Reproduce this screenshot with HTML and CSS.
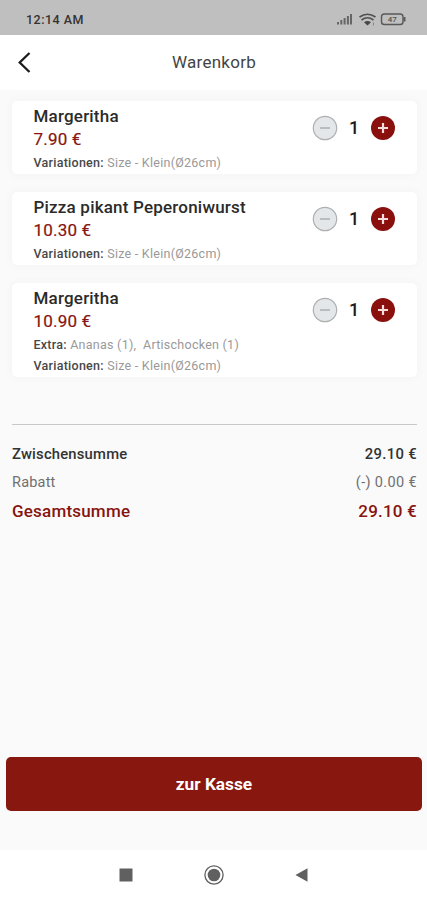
FILE: index.html
```html
<!DOCTYPE html>
<html lang="de">
<head>
<meta charset="utf-8">
<title>Warenkorb</title>
<link rel="stylesheet" href="styles.css">
</head>
<body>
<div class="status">
  <span class="time">12:14 AM</span>
  <svg class="status-icons" width="74" height="18" viewBox="0 0 74 18">
    <g fill="#666"><rect x="1" y="11" width="2" height="2.500"/><rect x="4.300" y="9" width="2" height="4.500"/><rect x="7.600" y="7" width="2" height="6.500"/><rect x="10.900" y="5" width="2" height="8.500"/><rect x="14" y="3" width="2" height="10.500"/></g>
    <g fill="none" stroke="#505050" stroke-width="1.700"><path d="M23.500 6q8-5.500 16 0"/><path d="M25.500 9q6-4.500 12 0"/></g>
    <path d="M28 11.200q3.500-2.500 7 0l-3.500 3.300z" fill="#484848"/>
    <path d="M37.500 11.500v3" stroke="#888"/>
    <rect x="45.500" y="3" width="21.500" height="10.500" rx="2.800" fill="none" stroke="#585858" stroke-width="1.400"/>
    <path d="M68.500 6v4.500" stroke="#585858" stroke-width="2"/>
    <text class="battery" x="56.300" y="11.200" text-anchor="middle">47</text>
  </svg>
</div>
<header class="header">
  <svg class="back" width="16" height="24" viewBox="0 0 16 24"><path d="M13.500 2L3.700 11.500L13.500 21" fill="none" stroke="#1c1c1c" stroke-width="2.300"/></svg>
  <h1 class="title">Warenkorb</h1>
</header>
<main class="main">
  <section class="cards">
    <article class="card">
      <div class="info">
        <div class="name">Margeritha</div>
        <div class="price">7.90 €</div>
        <div class="detail"><b>Variationen:</b> Size - Klein(Ø26cm)</div>
      </div>
      <div class="stepper">
        <svg width="26" height="26" viewBox="0 0 26 26"><circle cx="13" cy="13" r="11.700" fill="#e4e7e9" stroke="#adafb0" stroke-width="1.200"/><path d="M8 13h10" stroke="#b5b8ba" stroke-width="1.800"/></svg>
        <span class="qty">1</span>
        <svg width="26" height="26" viewBox="0 0 26 26"><circle cx="13" cy="13" r="12" fill="#8a100e"/><path d="M8 13h10M13 8v10" stroke="#f3dddd" stroke-width="2.200"/></svg>
      </div>
    </article>
    <article class="card">
      <div class="info">
        <div class="name">Pizza pikant Peperoniwurst</div>
        <div class="price">10.30 €</div>
        <div class="detail"><b>Variationen:</b> Size - Klein(Ø26cm)</div>
      </div>
      <div class="stepper">
        <svg width="26" height="26" viewBox="0 0 26 26"><circle cx="13" cy="13" r="11.700" fill="#e4e7e9" stroke="#adafb0" stroke-width="1.200"/><path d="M8 13h10" stroke="#b5b8ba" stroke-width="1.800"/></svg>
        <span class="qty">1</span>
        <svg width="26" height="26" viewBox="0 0 26 26"><circle cx="13" cy="13" r="12" fill="#8a100e"/><path d="M8 13h10M13 8v10" stroke="#f3dddd" stroke-width="2.200"/></svg>
      </div>
    </article>
    <article class="card">
      <div class="info">
        <div class="name">Margeritha</div>
        <div class="price">10.90 €</div>
        <div class="detail"><b>Extra:</b> Ananas (1),&nbsp; Artischocken (1)</div>
        <div class="detail"><b>Variationen:</b> Size - Klein(Ø26cm)</div>
      </div>
      <div class="stepper">
        <svg width="26" height="26" viewBox="0 0 26 26"><circle cx="13" cy="13" r="11.700" fill="#e4e7e9" stroke="#adafb0" stroke-width="1.200"/><path d="M8 13h10" stroke="#b5b8ba" stroke-width="1.800"/></svg>
        <span class="qty">1</span>
        <svg width="26" height="26" viewBox="0 0 26 26"><circle cx="13" cy="13" r="12" fill="#8a100e"/><path d="M8 13h10M13 8v10" stroke="#f3dddd" stroke-width="2.200"/></svg>
      </div>
    </article>
  </section>
  <section class="totals">
    <div class="row subtotal"><span>Zwischensumme</span><span class="amount">29.10 €</span></div>
    <div class="row discount"><span>Rabatt</span><span class="amount">(-) 0.00 €</span></div>
    <div class="row total"><span>Gesamtsumme</span><span>29.10 €</span></div>
  </section>
  <button class="checkout">zur Kasse</button>
</main>
<nav class="nav">
  <svg width="20" height="20" viewBox="0 0 20 20"><rect x="3.500" y="3.500" width="13" height="13" fill="#606060"/></svg>
  <svg width="20" height="20" viewBox="0 0 20 20"><circle cx="10" cy="10" r="9.100" fill="none" stroke="#606060" stroke-width="1.300"/><circle cx="10" cy="10" r="6.300" fill="#606060"/></svg>
  <svg width="20" height="20" viewBox="0 0 20 20"><path d="M3.500 10L15.500 3.200V16.800Z" fill="#606060"/></svg>
</nav>
</body>
</html>
```
FILE: styles.css
```css
* { box-sizing: border-box; }
body {
  margin: 0;
  height: 900px;
  display: flex;
  flex-direction: column;
  background: #fff;
  font-family: Roboto, "Liberation Sans", sans-serif;
  overflow: hidden;
}
svg { display: block; flex: none; }
.status {
  height: 35px;
  background: #bfbfbf;
  display: flex;
  justify-content: space-between;
  align-items: center;
  padding: 4px 17px 0 26px;
}
.time { font-size: 12.5px; font-weight: 500; letter-spacing: .5px; color: #333; }
.battery { font-size: 8px; font-weight: 500; fill: #555; }
.header {
  height: 55px;
  display: grid;
  grid-template-columns: 16px 1fr 16px;
  align-items: center;
  padding: 0 15px 0 16px;
}
.title { margin: 0; padding-bottom: 2px; text-align: center; font-size: 17px; font-weight: 400; letter-spacing: .25px; color: #444; }
.main {
  height: 760px;
  background: #fafafa;
  display: flex;
  flex-direction: column;
  padding: 11px 5px 0 6px;
}
.cards { display: flex; flex-direction: column; gap: 18px; padding: 0 5px 0 5.500px; }
.card {
  display: flex;
  justify-content: space-between;
  background: #fff;
  border-radius: 5px;
  padding: 4px 21px 0 22px;
  box-shadow: 0 0 7px 3px rgba(0, 0, 0, .02);
}
.name, .price { font-size: 17px; line-height: 23px; letter-spacing: .2px; }
.name { font-weight: 500; color: #2b2b2b; }
.price { color: #87140f; -webkit-text-stroke: .2px #87140f; }
.detail { font-size: 12.5px; line-height: 20.500px; letter-spacing: .26px; color: #999; }
.price + .detail { margin-top: 1.800px; }
.card .detail:last-child { margin-bottom: .9px; }
.detail b { font-weight: 500; color: #484848; }
.stepper { display: flex; align-items: center; height: 26px; margin-top: 9.500px; }
.qty { width: 32px; text-align: center; font-size: 18px; font-weight: 500; color: #1a1a1a; }
.totals {
  margin: 46.800px 5px 0 6px;
  padding-top: 15px;
  border-top: 1px solid #c8c8c8;
}
.row { display: flex; justify-content: space-between; height: 29px; align-items: center; letter-spacing: .2px; }
.subtotal { font-size: 14.8px; font-weight: 500; color: #333; }
.subtotal, .discount { height: 28.500px; }
.discount { font-size: 14.5px; color: #707070; }
.amount { letter-spacing: .35px; }
.total { font-size: 17px; font-weight: 500; color: #87140f; }
.checkout {
  margin: auto 0 39px;
  height: 54px;
  border: 0;
  border-radius: 5px;
  background: #87170f;
  color: #fff;
  font: 700 17.3px Roboto, sans-serif;
}
.nav { height: 50px; display: flex; justify-content: center; align-items: center; gap: 68px; }
```
